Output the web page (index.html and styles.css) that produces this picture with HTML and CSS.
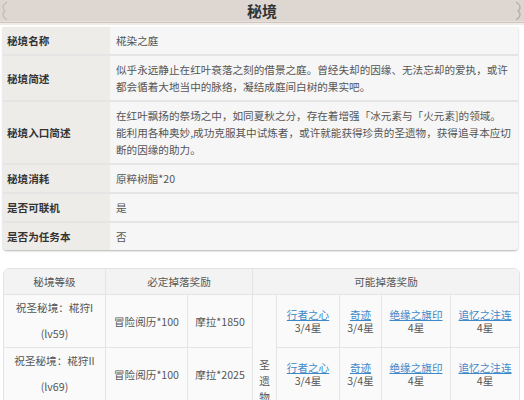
FILE: index.html
```html
<!DOCTYPE html>
<html lang="zh-CN">
<head>
<meta charset="utf-8">
<title>秘境</title>
<link rel="stylesheet" href="styles.css">
</head>
<body>
<div class="banner">
  <svg class="curl curl-left" width="10" height="22" viewBox="0 0 10 22"><path d="M7 2 C2 5 2 9 5 11 C2 13 2 17 7 20" fill="none" stroke="#c4bab2" stroke-width="1.2"/></svg>
  <h1 class="title">秘境</h1>
  <svg class="curl curl-right" width="10" height="22" viewBox="0 0 10 22"><path d="M3 2 C8 5 8 9 5 11 C8 13 8 17 3 20" fill="none" stroke="#b9aea6" stroke-width="1.4"/></svg>
</div>

<div class="info">
  <div class="row"><div class="label">秘境名称</div><div class="value">椛染之庭</div></div>
  <div class="row"><div class="label">秘境简述</div><div class="value">似乎永远静止在红叶衰落之刻的借景之庭。曾经失却的因缘、无法忘却的爱执，或许<br>都会循着大地当中的脉络，凝结成庭间白树的果实吧。</div></div>
  <div class="row"><div class="label">秘境入口简述</div><div class="value">在红叶飘扬的祭场之中，如同夏秋之分，存在着增强「冰元素与「火元素]的领域。<br>能利用各种奥妙,成功克服其中试炼者，或许就能获得珍贵的圣遗物，获得追寻本应切<br>断的因缘的助力。</div></div>
  <div class="row"><div class="label">秘境消耗</div><div class="value">原粹树脂*20</div></div>
  <div class="row"><div class="label">是否可联机</div><div class="value">是</div></div>
  <div class="row"><div class="label">是否为任务本</div><div class="value">否</div></div>
</div>

<div class="drops">
  <table class="drops-table">
    <colgroup>
      <col class="c-level"><col class="c-exp"><col class="c-mora"><col class="c-vert">
      <col class="c-a"><col class="c-b"><col class="c-c"><col class="c-d">
    </colgroup>
    <tr class="head">
      <th>秘境等级</th>
      <th colspan="2">必定掉落奖励</th>
      <th colspan="5">可能掉落奖励</th>
    </tr>
    <tr>
      <td class="level">祝圣秘境：椛狩I<br>(lv59)</td>
      <td>冒险阅历*100</td>
      <td>摩拉*1850</td>
      <td class="vert" rowspan="3">圣遗物</td>
      <td class="item"><a href="#">行者之心</a><br>3/4星</td>
      <td class="item"><a href="#">奇迹</a><br>3/4星</td>
      <td class="item"><a href="#">绝缘之旗印</a><br>4星</td>
      <td class="item"><a href="#">追忆之注连</a><br>4星</td>
    </tr>
    <tr>
      <td class="level">祝圣秘境：椛狩II<br>(lv69)</td>
      <td>冒险阅历*100</td>
      <td>摩拉*2025</td>
      <td class="item"><a href="#">行者之心</a><br>3/4星</td>
      <td class="item"><a href="#">奇迹</a><br>3/4星</td>
      <td class="item"><a href="#">绝缘之旗印</a><br>4星</td>
      <td class="item"><a href="#">追忆之注连</a><br>4星</td>
    </tr>
    <tr>
      <td class="level">祝圣秘境：椛狩III<br>(lv79)</td>
      <td>冒险阅历*100</td>
      <td>摩拉*2200</td>
      <td class="item"><a href="#">行者之心</a><br>3/4星</td>
      <td class="item"><a href="#">奇迹</a><br>3/4星</td>
      <td class="item"><a href="#">绝缘之旗印</a><br>4星</td>
      <td class="item"><a href="#">追忆之注连</a><br>4星</td>
    </tr>
  </table>
</div>
</body>
</html>
```

FILE: styles.css
```css
* { box-sizing: border-box; }

body {
  margin: 0;
  background: #ffffff;
  font-family: "Noto Sans CJK SC", "Noto Sans", sans-serif;
  font-size: 10.6px;
  color: #555555;
}

.banner {
  position: relative;
  height: 22px;
  background: #ddd6d1;
  border-bottom: 1px solid #e9e2dc;
  box-shadow: 0 1px 0 #cdc4bc, 0 3px 0 #f0ebe6;
  text-align: center;
}

.title {
  margin: 0;
  font-size: 15px;
  line-height: 21px;
  font-weight: bold;
  color: #333333;
}

.curl {
  position: absolute;
  top: 0;
}
.curl-left { left: 0; }
.curl-right { right: 1px; }

.info {
  margin: 5px 6px 0 3px;
  border-radius: 0 0 4px 4px;
  overflow: hidden;
  box-shadow: 0 1px 2px rgba(0, 0, 0, 0.3);
}

.row {
  display: grid;
  grid-template-columns: 107px 1fr;
  border-bottom: 2px solid #e5e5e5;
}
.row:last-child { border-bottom: 0; }

.label {
  display: flex;
  align-items: center;
  padding: 5px 4px;
  background: #eeece9;
  color: #333333;
  font-weight: bold;
  line-height: 17px;
}

.value {
  padding: 5px 6px;
  background: #f6f6f6;
  line-height: 17px;
  white-space: nowrap;
}

.drops {
  margin: 18px 4px 0 3px;
  border: 1px solid #e3e3e3;
  border-radius: 6px 6px 0 0;
  overflow: hidden;
}

.drops-table {
  width: 100%;
  border-collapse: separate;
  border-spacing: 0;
  table-layout: fixed;
}

.c-level { width: 102px; }
.c-exp { width: 82px; }
.c-mora { width: 65px; }
.c-vert { width: 24px; }
.c-a { width: 63px; }
.c-b { width: 42px; }
.c-c { width: 69px; }
.c-d { width: 68px; }

.drops-table th,
.drops-table td {
  padding: 0;
  text-align: center;
  font-weight: normal;
  border-right: 1px solid #e4e4e4;
  border-bottom: 1px solid #e4e4e4;
  background: #fafafa;
  white-space: nowrap;
}
.drops-table tr > :last-child { border-right: 0; }

.head th {
  height: 26px;
  background: #f3f3f3;
}

.level {
  line-height: 26px;
  height: 53px;
}

.item { line-height: 13px; }

.item a {
  color: #3f88c8;
  text-decoration: underline;
}

.vert {
  padding: 14px 6px 0 6px !important;
  white-space: normal !important;
  word-break: break-all;
  line-height: 16px;
}
```
